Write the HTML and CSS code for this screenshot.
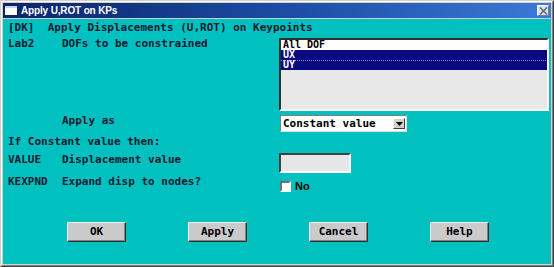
FILE: index.html
```html
<!DOCTYPE html>
<html>
<head>
<meta charset="utf-8">
<link rel="stylesheet" href="styles.css">
</head>
<body>
<div class="window">
  <div class="frame">
    <div class="titlebar">
      <span class="title-icon"></span>
      <span class="title-text">Apply U,ROT on KPs</span>
      <span class="close-btn">
        <svg width="9" height="8" viewBox="0 0 9 8"><path d="M1 0.5 L8 7.5 M8 0.5 L1 7.5" stroke="#6a6a7a" stroke-width="1.6"/></svg>
      </span>
    </div>
    <div class="content">
      <div class="header">[DK]  Apply Displacements (U,ROT) on Keypoints</div>
      <div class="form">
        <div class="code row-list">Lab2</div>
        <div class="prompt row-list">DOFs to be constrained</div>
        <div class="control">
          <div class="listbox">
            <div class="item">All DOF</div>
            <div class="item sel">UX</div>
            <div class="item sel focus">UY</div>
          </div>
        </div>

        <div class="code row-apply"></div>
        <div class="prompt row-apply">Apply as</div>
        <div class="control ctl-apply">
          <div class="dropdown">
            <span class="dd-text">Constant value</span>
            <span class="dd-btn"><svg width="7" height="4" viewBox="0 0 7 4"><path d="M0 0 H7 L3.5 4 Z" fill="#000"/></svg></span>
          </div>
        </div>

        <div class="section">If Constant value then:</div>

        <div class="code row-value">VALUE</div>
        <div class="prompt row-value">Displacement value</div>
        <div class="control ctl-value">
          <div class="textinput"></div>
        </div>

        <div class="code row-kex">KEXPND</div>
        <div class="prompt row-kex">Expand disp to nodes?</div>
        <div class="control ctl-kex">
          <span class="checkbox"></span>
          <span class="check-label">No</span>
        </div>
      </div>
      <div class="buttons">
        <div class="btn">OK</div>
        <div class="btn">Apply</div>
        <div class="btn">Cancel</div>
        <div class="btn">Help</div>
      </div>
    </div>
  </div>
</div>
</body>
</html>
```
FILE: styles.css
```css
html, body {
  margin: 0;
  padding: 0;
  background: #ffffff;
}
.window {
  width: 554px;
  height: 267px;
  box-sizing: border-box;
  background: #d4d0c8;
  border: 1px solid;
  border-color: #d4d0c8 #404040 #404040 #d4d0c8;
}
.frame {
  height: 100%;
  box-sizing: border-box;
  border: 1px solid;
  border-color: #ffffff #808080 #808080 #ffffff;
  padding: 1px;
  display: flex;
  flex-direction: column;
}
.titlebar {
  height: 15px;
  flex: none;
  display: flex;
  align-items: center;
  background: linear-gradient(to right, #0a246a 0%, #1d4fa8 55%, #3a7ad8 100%);
  padding-left: 2px;
  padding-right: 2px;
}
.title-icon {
  width: 12px;
  height: 9px;
  box-sizing: border-box;
  background: #ffffff;
  border-top: 2px solid #c8d8f0;
  margin-right: 4px;
}
.title-text {
  color: #ffffff;
  font-family: "Liberation Sans", sans-serif;
  font-weight: bold;
  font-size: 10px;
  letter-spacing: -0.15px;
  flex: 1;
}
.close-btn {
  width: 12px;
  height: 11px;
  box-sizing: border-box;
  background: #dce4ee;
  border: 1px solid;
  border-color: #ffffff #7080a0 #7080a0 #ffffff;
  display: flex;
  align-items: center;
  justify-content: center;
}
.content {
  flex: 1;
  background: #00c0c0;
  margin-top: 1px;
  padding: 2px 2px 0 5px;
  font-family: "DejaVu Sans Mono", "Liberation Mono", monospace;
  font-weight: bold;
  font-size: 11px;
  line-height: 12px;
  color: #0a1a30;
  display: flex;
  flex-direction: column;
}
.header {
  white-space: pre;
  height: 12px;
  margin-top: 1px;
}
.form {
  margin-top: 4px;
  display: grid;
  grid-template-columns: 54px 217px 1fr;
  align-items: start;
}
.code, .prompt {
  white-space: pre;
}
.row-list { margin-top: 0; }
.row-apply { margin-top: 4px; }
.row-value { margin-top: 6px; }
.row-kex { margin-top: 3px; }
.listbox {
  height: 73px;
  box-sizing: border-box;
  border: 2px solid;
  border-color: #303030 #ffffff #ffffff #303030;
  background: #e8e8e8;
  font-size: 10px;
  color: #000000;
}
.item {
  height: 10px;
  line-height: 10px;
  padding-left: 2px;
  background: #ffffff;
  box-sizing: border-box;
  overflow: hidden;
}
.item.sel {
  background: #0a0a80;
  color: #ffffff;
}
.item.focus {
  background: repeating-linear-gradient(to right, #9090d0 0 1px, transparent 1px 2px) top left / 100% 1px no-repeat, #0a0a80;
}
.ctl-apply {
  margin-top: 4px;
  padding-left: 1px;
}
.dropdown {
  width: 127px;
  height: 17px;
  box-sizing: border-box;
  background: #ffffff;
  border: 1px solid;
  border-color: #808080 #e0e0e0 #e0e0e0 #808080;
  display: flex;
  align-items: center;
  padding-left: 2px;
  padding-right: 1px;
  color: #000000;
}
.dd-text {
  flex: 1;
}
.dd-btn {
  width: 12px;
  height: 11px;
  box-sizing: border-box;
  background: #d4d0c8;
  border: 1px solid;
  border-color: #ffffff #404040 #404040 #ffffff;
  display: flex;
  align-items: center;
  justify-content: center;
}
.section {
  grid-column: 1 / 4;
  margin-top: 4px;
  white-space: pre;
}
.ctl-value {
  margin-top: 5px;
}
.textinput {
  width: 72px;
  height: 20px;
  box-sizing: border-box;
  background: #e6e6e6;
  border: 2px solid;
  border-color: #404040 #ffffff #ffffff #404040;
}
.ctl-kex {
  margin-top: 7px;
  padding-left: 1px;
  display: flex;
  align-items: center;
}
.checkbox {
  width: 11px;
  height: 11px;
  box-sizing: border-box;
  background: #ffffff;
  border: 2px solid;
  border-color: #707070 #ffffff #ffffff #707070;
}
.check-label {
  margin-left: 4px;
  font-family: "Liberation Sans", sans-serif;
  font-weight: bold;
  font-size: 11px;
  color: #000000;
}
.buttons {
  display: flex;
  gap: 62px;
  padding-left: 59px;
  margin-top: 30px;
}
.btn {
  width: 59px;
  height: 20px;
  box-sizing: border-box;
  background: #cacaca;
  border: 1px solid;
  border-color: #f0f0f0 #303030 #303030 #f0f0f0;
  box-shadow: inset -1px -1px 0 #808080;
  display: flex;
  align-items: center;
  justify-content: center;
  color: #000000;
}
```
